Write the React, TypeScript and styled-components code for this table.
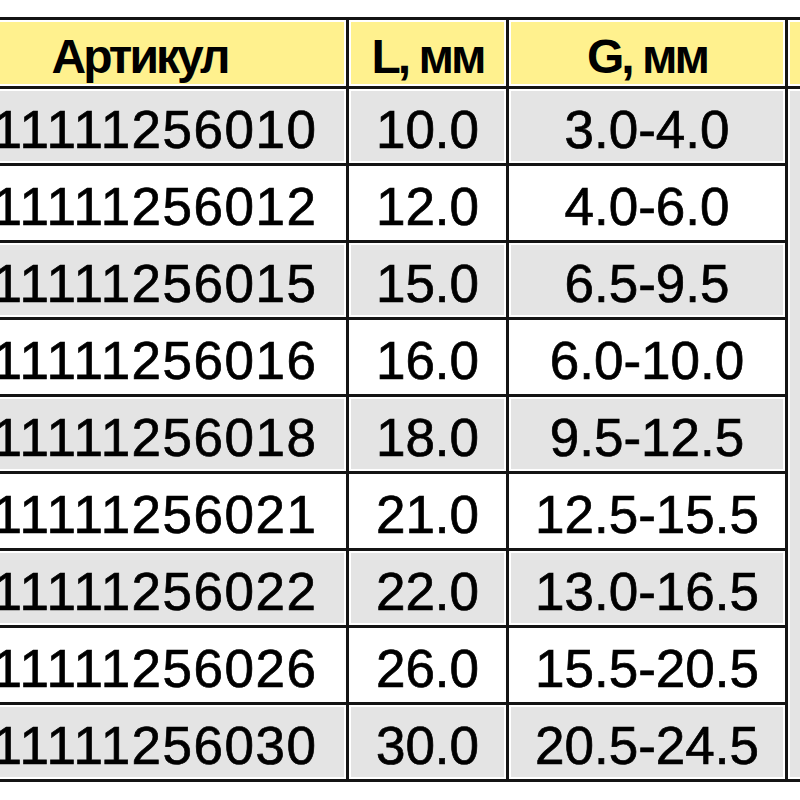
import styled, { createGlobalStyle } from 'styled-components';

const GlobalStyle = createGlobalStyle`
  html, body {
    margin: 0;
    padding: 0;
    background: #fff;
    overflow: hidden;
  }
  body {
    font-family: 'Liberation Sans', Arial, sans-serif;
    color: #000;
  }
`;

// the picture is a crop: first and last columns run past the edges
const Table = styled.div`
  display: grid;
  grid-template-columns: 413px 157px 276px 200px;
  grid-template-rows: 66px repeat(9, 74px);
  gap: 3px;
  padding: 3px;
  width: max-content;
  margin: 17px 0 0 -70px;
  background: #141414;
`;

const Cell = styled.div<{ shade: 'head' | 'grey' | 'white' }>`
  display: flex;
  align-items: center;
  justify-content: center;
  padding-top: 6px;
  box-sizing: border-box;
  white-space: nowrap;
  background: ${(p) =>
    p.shade === 'head' ? '#fff18e' : p.shade === 'grey' ? '#e4e4e4' : '#fff'};
  box-shadow: inset 0 0 0 2px #fff;
  font-size: ${(p) => (p.shade === 'head' ? '48px' : '53px')};
  font-weight: ${(p) => (p.shade === 'head' ? 700 : 400)};
  letter-spacing: ${(p) => (p.shade === 'head' ? '-3px' : '0')};
  -webkit-text-stroke: ${(p) => (p.shade === 'head' ? '0' : '0.7px #000')};
`;

const CodeCell = styled(Cell)`
  letter-spacing: 1.5px;
`;

const SideCell = styled(Cell)`
  grid-column: 4;
  grid-row: 2 / span 9;
`;

interface IRow {
  code: string;
  l: string;
  g: string;
}

const rows: IRow[] = [
  { code: '011111256010', l: '10.0', g: '3.0-4.0' },
  { code: '011111256012', l: '12.0', g: '4.0-6.0' },
  { code: '011111256015', l: '15.0', g: '6.5-9.5' },
  { code: '011111256016', l: '16.0', g: '6.0-10.0' },
  { code: '011111256018', l: '18.0', g: '9.5-12.5' },
  { code: '011111256021', l: '21.0', g: '12.5-15.5' },
  { code: '011111256022', l: '22.0', g: '13.0-16.5' },
  { code: '011111256026', l: '26.0', g: '15.5-20.5' },
  { code: '011111256030', l: '30.0', g: '20.5-24.5' },
];

function App() {
  return (
    <>
      <GlobalStyle />
      <Table>
        <Cell shade="head">Артикул</Cell>
        <Cell shade="head">L, мм</Cell>
        <Cell shade="head">G, мм</Cell>
        <Cell shade="head"></Cell>
        <SideCell shade="grey"></SideCell>
        {rows.map((r, i) => {
          const shade = i % 2 === 0 ? 'grey' : 'white';
          return [
            <CodeCell key={r.code + 'a'} shade={shade}>
              {r.code}
            </CodeCell>,
            <Cell key={r.code + 'l'} shade={shade}>
              {r.l}
            </Cell>,
            <Cell key={r.code + 'g'} shade={shade}>
              {r.g}
            </Cell>,
          ];
        })}
      </Table>
    </>
  );
}

export default App;
